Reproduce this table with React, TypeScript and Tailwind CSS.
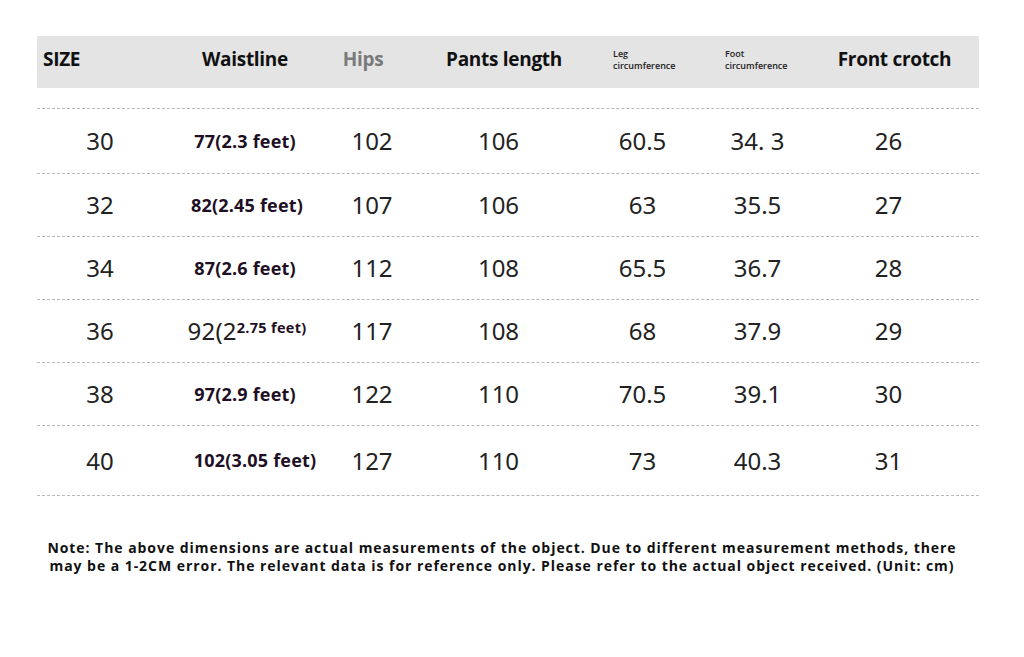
const rows = [
  { size: "30", waist: "77(2.3 feet)", hips: "102", length: "106", leg: "60.5", foot: "34. 3", crotch: "26" },
  { size: "32", waist: "82(2.45 feet)", hips: "107", length: "106", leg: "63", foot: "35.5", crotch: "27" },
  { size: "34", waist: "87(2.6 feet)", hips: "112", length: "108", leg: "65.5", foot: "36.7", crotch: "28" },
  { size: "36", waist: "", hips: "117", length: "108", leg: "68", foot: "37.9", crotch: "29" },
  { size: "38", waist: "97(2.9 feet)", hips: "122", length: "110", leg: "70.5", foot: "39.1", crotch: "30" },
  { size: "40", waist: "102(3.05 feet)", hips: "127", length: "110", leg: "73", foot: "40.3", crotch: "31" },
]

const num = "font-['Noto_Sans',sans-serif] text-[24px] text-[#222] font-normal"
const head = "font-['Open_Sans',sans-serif] font-bold text-[19px] tracking-[-0.3px]"
const small = "font-['Open_Sans',sans-serif] font-semibold text-[9px] leading-[12px] text-[#222]"

export default function App() {
  return (
    <div className="w-[1024px] h-[657px] bg-white pt-[36px] pl-[37px] overflow-hidden">
      <div className="w-[942px]">
        {/* Header band */}
        <div className="flex h-[52px] items-center pb-[6px] bg-[#e4e4e4]">
          <div className={`w-[126px] pl-[6px] text-[#111] ${head}`}>SIZE</div>
          <div className={`w-[164px] text-center text-[#111] ${head}`}>Waistline</div>
          <div className={`w-[90px] pr-[18px] text-center text-[#7a7a7a] ${head}`}>Hips</div>
          <div className={`w-[163px] pl-[11px] text-center text-[#111] ${head}`}>Pants length</div>
          <div className={`w-[125px] pl-[33px] pt-[2px] ${small}`}>
            <div>Leg</div>
            <div>circumference</div>
          </div>
          <div className={`w-[105px] pl-[20px] pt-[2px] ${small}`}>
            <div>Foot</div>
            <div>circumference</div>
          </div>
          <div className={`w-[169px] text-center text-[#111] ${head}`}>Front crotch</div>
        </div>

        {/* Table body */}
        <div className="mt-[20px] border-t border-dashed border-[#b8b8b8]">
          {rows.map((r, i) => (
            <div
              key={r.size}
              className={`flex items-center border-b border-dashed border-[#b8b8b8] ${i === 0 ? "h-[65px]" : i === rows.length - 1 ? "h-[70px]" : "h-[63px]"}`}
            >
              <div className={`w-[126px] text-center ${num}`}>{r.size}</div>
              <div className="w-[164px] text-center font-['Open_Sans',sans-serif] font-bold text-[18px] text-[#1e0f24] tracking-[0.2px]">
                {r.waist ? (
                  <span className={i === 5 ? "pl-[20px]" : i === 1 ? "pl-[4px]" : ""}>{r.waist}</span>
                ) : (
                  <span className="pl-[4px]">
                    <span className={num}>92(2</span>
                    <span className="relative -top-[7px] text-[14.5px] tracking-[0.3px]">2.75 feet)</span>
                  </span>
                )}
              </div>
              <div className={`w-[90px] text-center ${num}`}>{r.hips}</div>
              <div className={`w-[163px] text-center ${num}`}>{r.length}</div>
              <div className={`w-[125px] text-center ${num}`}>{r.leg}</div>
              <div className={`w-[105px] text-center ${num}`}>{r.foot}</div>
              <div className={`w-[169px] pr-[12px] text-center ${num}`}>{r.crotch}</div>
            </div>
          ))}
        </div>

        {/* Note */}
        <div className="mt-[43px] pr-[12px] text-center font-['Open_Sans',sans-serif] font-bold text-[14px] leading-[18px] text-[#111] tracking-[0.95px]">
          <p>Note: The above dimensions are actual measurements of the object. Due to different measurement methods, there</p>
          <p>may be a 1-2CM error. The relevant data is for reference only. Please refer to the actual object received. (Unit: cm)</p>
        </div>
      </div>
    </div>
  )
}
